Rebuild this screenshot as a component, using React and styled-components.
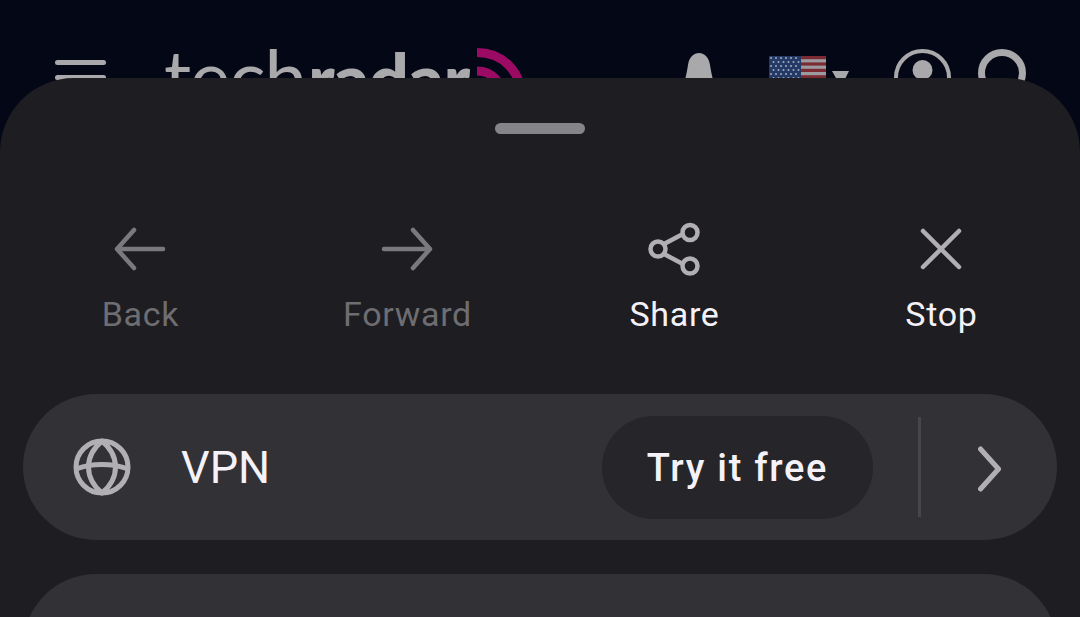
import styled, { createGlobalStyle } from 'styled-components';

const Global = createGlobalStyle`
  html, body { margin: 0; padding: 0; background: #040716; }
  * { box-sizing: border-box; }
`;

const Page = styled.div`
  height: 617px; overflow: hidden; background: #040716; font-family: Roboto, "Liberation Sans", sans-serif;
`;

const Header = styled.header`
  height: 140px; display: flex; align-items: flex-start; padding-top: 48px;
`;

const Burger = styled.div`
  width: 51px; margin-left: 55px; margin-top: 12px; display: flex; flex-direction: column; gap: 10px;
`;

const BurgerBar = styled.span`
  display: block; height: 5px; border-radius: 3px; background: #a9a9ab;
`;

const Logo = styled.div`
  display: flex; align-items: flex-start; margin-left: 58px; width: 362px; position: relative;
`;

const LogoText = styled.div`
  display: flex; align-items: baseline; color: #a9a9ab; white-space: nowrap; margin-top: -11px;
  font-family: Lato, sans-serif; font-weight: 400; font-size: 76px; line-height: 78px; letter-spacing: -1px;
`;

const LogoBold = styled.span`
  font-weight: 900; font-size: 71px; margin-left: 2px;
`;

const Waves = styled.svg`
  position: absolute; left: 313px; top: 0;
`;

const Bell = styled.svg`
  margin-left: 157px; margin-top: 5px;
`;

const Flag = styled.svg`
  margin-left: 54px; margin-top: 8px;
`;

const Caret = styled.div`
  width: 0; height: 0; margin-left: 6px; margin-top: 23px;
  border-left: 9px solid transparent; border-right: 8px solid transparent; border-top: 16px solid #a9a9ab;
`;

const Account = styled.svg`
  margin-left: 45px; margin-top: 1px;
`;

const Search = styled.svg`
  margin-left: 27px; margin-top: 1px;
`;

const Sheet = styled.section`
  position: relative; margin-top: -62px; height: 539px; padding-top: 45px;
  background: #1e1d21; border-radius: 74px 74px 0 0;
`;

const Handle = styled.div`
  width: 90px; height: 11px; margin: 0 auto; border-radius: 6px; background: #858489;
`;

const Actions = styled.nav`
  display: grid; grid-template-columns: repeat(4, 267px); padding: 0 6px; margin-top: 87px;
`;

const Action = styled.button`
  display: flex; flex-direction: column; align-items: center; padding: 0; border: 0; background: none; font-family: inherit;
  color: ${p => (p.disabled ? '#6e6d72' : '#f4f2f8')};
`;

const ActionIcon = styled.svg`
  display: block; color: ${p => (p.$dim ? '#7a797e' : '#b1afb4')};
`;

const ActionLabel = styled.span`
  font-size: 34px; line-height: 40px; margin-top: 17px; margin-left: 2px; letter-spacing: 0.7px;
`;

const VpnRow = styled.div`
  display: flex; align-items: center; height: 146px; margin: 60px 23px 0; padding: 0 56px 0 50px;
  border-radius: 73px; background: #323136;
`;

const VpnLabel = styled.span`
  font-size: 45px; line-height: 52px; margin-left: 50px; padding-top: 2px; color: #f4f2f8;
`;

const TryButton = styled.button`
  width: 271px; height: 103px; margin-left: auto; border: 0; border-radius: 52px; padding: 2px 0 0;
  background: #26252a; color: #f4f2f8; font-family: inherit; font-weight: 500; font-size: 38px; letter-spacing: 1.7px;
`;

const Divider = styled.div`
  width: 3px; height: 100px; margin-left: 45px; background: #47464b;
`;

const Chevron = styled.svg`
  margin-left: 57px; margin-top: 3px; display: block;
`;

const NextCard = styled.div`
  height: 160px; margin: 34px 23px 0; border-radius: 73px; background: #323136;
`;

const stroke = { fill: 'none', stroke: 'currentColor', strokeWidth: 4.5, strokeLinecap: 'round', strokeLinejoin: 'round' };

export default function App() {
  return (
    <Page>
      <Global />
      <Header>
        <Burger>
          <BurgerBar />
          <BurgerBar />
          <BurgerBar />
        </Burger>
        <Logo>
          <LogoText>tech<LogoBold>radar</LogoBold></LogoText>
          <Waves width="50" height="60" viewBox="0 0 50 60" fill="none" stroke="#9c0b63" strokeWidth="9">
            <path d="M0 4.5 C26 4.5 44.5 24 44.5 50" />
            <path d="M0 23 C15 23 26 35 26 50" />
          </Waves>
        </Logo>
        <Bell width="32" height="50" viewBox="0 0 32 50" fill="#a9a9ab">
          <path d="M1 30 C3 24 4 18 5 12 C6 4 11 0 16 0 C21 0 26 4 27 12 C28 18 29 24 31 30 L31 50 L1 50 Z" />
        </Bell>
        <Flag width="57" height="40" viewBox="0 0 57 40">
          <rect width="57" height="40" fill="#9a9a9f" />
          {[0, 6.4, 12.8, 19.2].map(y => <rect key={y} x="0" y={y} width="57" height="3.2" fill="#7d2b33" />)}
          <rect width="32" height="24" fill="#243a66" />
          {[2, 6, 10, 14, 18, 22].flatMap((y, row) => [2, 7, 12, 17, 22, 27].map(x => (
            <circle key={`${x}-${y}`} cx={x + (row % 2) * 2.5} cy={y} r="1" fill="#a5abba" />
          )))}
        </Flag>
        <Caret />
        <Account width="57" height="60" viewBox="0 0 57 60" fill="none">
          <circle cx="28.5" cy="28.5" r="26.5" stroke="#a9a9ab" strokeWidth="4" />
          <circle cx="28.5" cy="21" r="10" fill="#a9a9ab" />
        </Account>
        <Search width="48" height="60" viewBox="0 0 48 60" fill="none">
          <circle cx="24" cy="24" r="20.5" stroke="#a9a9ab" strokeWidth="7" />
        </Search>
      </Header>
      <Sheet>
        <Handle />
        <Actions>
          <Action disabled>
            <ActionIcon $dim width="56" height="56" viewBox="0 0 56 56" {...stroke}>
              <path d="M51 28 H5 M22 9 L5 28 L22 47" />
            </ActionIcon>
            <ActionLabel>Back</ActionLabel>
          </Action>
          <Action disabled>
            <ActionIcon $dim width="56" height="56" viewBox="0 0 56 56" {...stroke}>
              <path d="M5 28 H51 M34 9 L51 28 L34 47" />
            </ActionIcon>
            <ActionLabel>Forward</ActionLabel>
          </Action>
          <Action>
            <ActionIcon width="56" height="56" viewBox="0 0 56 56" {...stroke}>
              <path d="M18 23 L35 14 M18 33 L35 42" />
              <circle cx="44" cy="11.5" r="7.5" />
              <circle cx="12" cy="28" r="7.5" />
              <circle cx="44" cy="45" r="7.5" />
            </ActionIcon>
            <ActionLabel>Share</ActionLabel>
          </Action>
          <Action>
            <ActionIcon width="56" height="56" viewBox="0 0 56 56" {...stroke}>
              <path d="M10 10 L46 46 M46 10 L10 46" />
            </ActionIcon>
            <ActionLabel>Stop</ActionLabel>
          </Action>
        </Actions>
        <VpnRow>
          <svg width="58" height="58" viewBox="0 0 58 58" fill="none" stroke="#b1afb4" strokeWidth="5">
            <circle cx="29" cy="29" r="26" />
            <path d="M29 3 C11 18 11 40 29 55 C47 40 47 18 29 3 Z" strokeLinejoin="round" />
            <path d="M3 31 C18 25 40 25 55 31" />
          </svg>
          <VpnLabel>VPN</VpnLabel>
          <TryButton>Try it free</TryButton>
          <Divider />
          <Chevron width="23" height="46" viewBox="0 0 23 46" fill="none" stroke="#b1afb4" strokeWidth="5" strokeLinecap="round" strokeLinejoin="round">
            <path d="M2.5 3 L20.5 23 L2.5 43" />
          </Chevron>
        </VpnRow>
        <NextCard />
      </Sheet>
    </Page>
  );
}
